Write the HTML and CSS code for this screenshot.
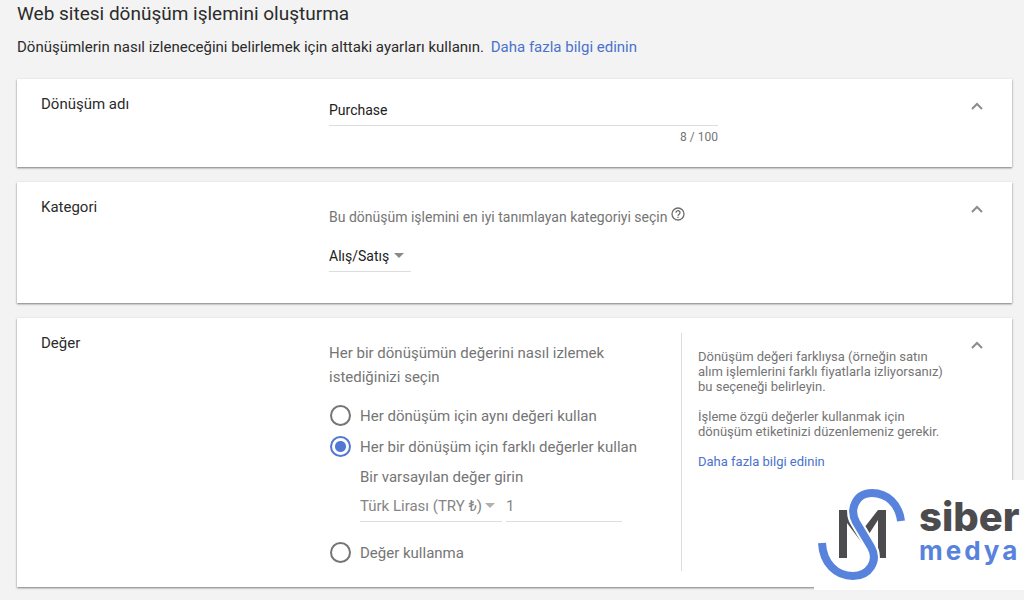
FILE: index.html
```html
<!DOCTYPE html>
<html lang="tr">
<head>
<meta charset="utf-8">
<meta name="viewport" content="width=device-width, initial-scale=1">
<title>Web sitesi dönüşüm işlemini oluşturma</title>
<link rel="stylesheet" href="styles.css">
</head>
<body>
<main class="page">
  <h1 class="title">Web sitesi dönüşüm işlemini oluşturma</h1>
  <p class="intro">Dönüşümlerin nasıl izleneceğini belirlemek için alttaki ayarları kullanın. <a class="link intro-link" href="#">Daha fazla bilgi edinin</a></p>

  <section class="card card-name">
    <h2 class="card-label"><label for="name">Dönüşüm adı</label></h2>
    <div class="card-body">
      <div class="name-field">
        <input class="name-input" id="name" type="text" value="Purchase" maxlength="100">
        <span class="counter">8 / 100</span>
      </div>
    </div>
    <button class="toggle" type="button" aria-label="Daralt"><svg class="chevron" viewBox="0 0 12 8"><path d="M1 7 6 2l5 5"/></svg></button>
  </section>

  <section class="card card-category">
    <h2 class="card-label">Kategori</h2>
    <div class="card-body">
      <div class="category-prompt">
        <label for="category">Bu dönüşüm işlemini en iyi tanımlayan kategoriyi seçin</label>
        <button class="help" type="button" aria-label="Yardım"><svg class="help-icon" viewBox="0 0 14 14"><circle cx="7" cy="7" r="6"/><path d="M5 5.700a2 2 0 1 1 3.200 1.500C7.400 7.800 7 8 7 8.800M7 9.800v1.200"/></svg></button>
      </div>
      <span class="select-box category-box">
        <select class="select" id="category"><option>Alış/Satış</option></select>
        <svg class="arrow" viewBox="0 0 10 5"><path d="M0 0h10L5 5z"/></svg>
      </span>
    </div>
    <button class="toggle" type="button" aria-label="Daralt"><svg class="chevron" viewBox="0 0 12 8"><path d="M1 7 6 2l5 5"/></svg></button>
  </section>

  <section class="card card-value">
    <h2 class="card-label">Değer</h2>
    <div class="card-body value-body">
      <fieldset class="options">
        <legend class="legend">Her bir dönüşümün değerini nasıl izlemek istediğinizi seçin</legend>
        <label class="option"><input class="radio" type="radio" name="value">Her dönüşüm için aynı değeri kullan</label>
        <label class="option"><input class="radio" type="radio" name="value" checked>Her bir dönüşüm için farklı değerler kullan</label>
        <div class="default-value">
          <label class="default-label" for="amount">Bir varsayılan değer girin</label>
          <div class="default-row">
            <span class="select-box currency-box">
              <select class="select" aria-label="Para birimi"><option>Türk Lirası (TRY ₺)</option></select>
              <svg class="arrow" viewBox="0 0 10 5"><path d="M0 0h10L5 5z"/></svg>
            </span>
            <input class="amount" id="amount" type="text" value="1">
          </div>
        </div>
        <label class="option"><input class="radio" type="radio" name="value">Değer kullanma</label>
      </fieldset>
      <aside class="note">
        <p class="note-text">Dönüşüm değeri farklıysa (örneğin satın alım işlemlerini farklı fiyatlarla izliyorsanız) bu seçeneği belirleyin.</p>
        <p class="note-text">İşleme özgü değerler kullanmak için dönüşüm etiketinizi düzenlemeniz gerekir.</p>
        <a class="link" href="#">Daha fazla bilgi edinin</a>
      </aside>
    </div>
    <button class="toggle" type="button" aria-label="Daralt"><svg class="chevron" viewBox="0 0 12 8"><path d="M1 7 6 2l5 5"/></svg></button>
  </section>
</main>

<div class="brand">
  <svg class="brand-mark" viewBox="0 0 90 94" aria-hidden="true">
    <path class="mark-m" d="M22 23h8l17 31-2 2L30 36v35h-8zM61 23h8v48h-8V33l-9 14-5-6z"/>
    <path class="mark-halo" d="M48 8C37 12 33 25 39 35L54 60C58 66 58 75 53 81"/>
    <path class="mark-s" d="M84 34C82 17 70 6 55 6 39 6 32 22 39 35L54 60C62 74 52 89 36 89 19 89 6 76 5 56"/>
  </svg>
  <div class="brand-words">
    <span class="brand-top">siber</span>
    <span class="brand-bottom">medya</span>
  </div>
</div>
</body>
</html>
```
FILE: styles.css
```css
* {
  box-sizing: border-box;
}

body {
  margin: 0;
  background: #f3f3f3;
  color: #2b2b2b;
  font: 15px/20px Roboto, "Noto Sans", sans-serif;
}

h1, h2, p, fieldset, legend {
  margin: 0;
  padding: 0;
  border: 0;
}

button, input, select {
  margin: 0;
  padding: 0;
  border: 0;
  background: none;
  color: inherit;
  font: inherit;
}

.page {
  padding: 0 12px 13px 17px;
}

.title {
  padding-top: 2px;
  font-size: 19px;
  font-weight: 400;
  line-height: 24px;
}

.intro {
  padding: 11px 0 22px;
}

.link {
  color: #4a72cc;
  text-decoration: none;
}

.intro-link {
  margin-left: 3px;
}

.card {
  display: flex;
  align-items: flex-start;
  margin-bottom: 15px;
  padding: 15px 24px;
  background: #fff;
  box-shadow: 0 1px 2px rgba(0, 0, 0, .5);
}

.card-name {
  min-height: 88px;
}

.card-category {
  min-height: 121px;
}

.card-value {
  min-height: 269px;
  padding-bottom: 16px;
  margin-bottom: 0;
}

.card-label {
  flex: 0 0 288px;
  font-size: 15px;
  font-weight: 400;
}

.card-body {
  flex: 1;
  color: #757575;
}

.toggle {
  display: flex;
  padding: 8px 5px;
}

.chevron {
  width: 12px;
  height: 8px;
  fill: none;
  stroke: #8c8c8c;
  stroke-width: 2;
}

.name-field {
  display: flex;
  flex-direction: column;
  max-width: 389px;
}

.name-input {
  height: 32px;
  border-bottom: 1px solid #ddd;
  color: #212121;
  font-size: 14px;
}

.counter {
  padding-top: 1px;
  font-size: 12px;
  text-align: right;
}

.category-prompt {
  display: flex;
  align-items: center;
  gap: 4px;
  padding-top: 10px;
  font-size: 14px;
}

.help {
  display: flex;
  padding-bottom: 6px;
}

.help-icon {
  width: 14px;
  height: 14px;
  fill: none;
  stroke: #6e6e6e;
  stroke-width: 1.3;
}

.select-box {
  display: flex;
  align-items: center;
  justify-content: space-between;
  border-bottom: 1px solid #ddd;
}

.select {
  appearance: none;
}

.arrow {
  width: 10px;
  height: 5px;
  fill: #8a8a8a;
}

.category-box {
  width: 82px;
  height: 32px;
  margin-top: 13px;
  padding-right: 7px;
  color: #212121;
  font-size: 14px;
}

.value-body {
  display: flex;
}

.options {
  flex: 0 0 352px;
}

.legend {
  width: 300px;
  padding: 8px 0 11px;
  line-height: 24px;
}

.option {
  display: flex;
  align-items: center;
  gap: 9px;
  height: 31px;
  padding-left: 1px;
}

.radio {
  appearance: none;
  width: 21px;
  height: 21px;
  border: 2px solid #757575;
  border-radius: 50%;
}

.radio:checked {
  border-color: #5178d2;
  background: radial-gradient(circle, #5178d2 5px, #fff 6px);
}

.default-value {
  padding: 5px 0 15px 31px;
}

.default-row {
  display: flex;
  gap: 4px;
  margin-top: 3px;
  color: #858585;
}

.currency-box {
  width: 142px;
  height: 32px;
  padding-right: 7px;
}

.currency-box .arrow {
  fill: #b0b0b0;
}

.amount {
  width: 116px;
  height: 32px;
  border-bottom: 1px solid #ddd;
}

.note {
  flex: 0 1 264px;
  min-height: 238px;
  padding: 16px 0 0 16px;
  border-left: 1px solid #ddd;
  font-size: 13px;
  line-height: 15px;
}

.note-text {
  margin-bottom: 15px;
}

.brand {
  position: absolute;
  top: 480px;
  right: 0;
  display: flex;
  gap: 12px;
  width: 210px;
  height: 110px;
  padding: 7px 0 0 3px;
  background: #fff;
  overflow: hidden;
}

.brand-mark {
  flex: none;
  width: 90px;
  height: 94px;
}

.mark-m {
  fill: #4c4c4e;
}

.mark-halo {
  fill: none;
  stroke: #fff;
  stroke-width: 12;
}

.mark-s {
  fill: none;
  stroke: #5883dc;
  stroke-width: 8;
}

.brand-words {
  display: flex;
  flex-direction: column;
  padding-top: 8px;
  font-family: Inter, sans-serif;
  font-weight: 800;
}

.brand-top {
  color: #4c4c4e;
  font-size: 40px;
  line-height: 44px;
}

.brand-bottom {
  color: #5883dc;
  font-size: 26px;
  line-height: 24px;
  font-weight: 700;
  letter-spacing: 3px;
}
```
